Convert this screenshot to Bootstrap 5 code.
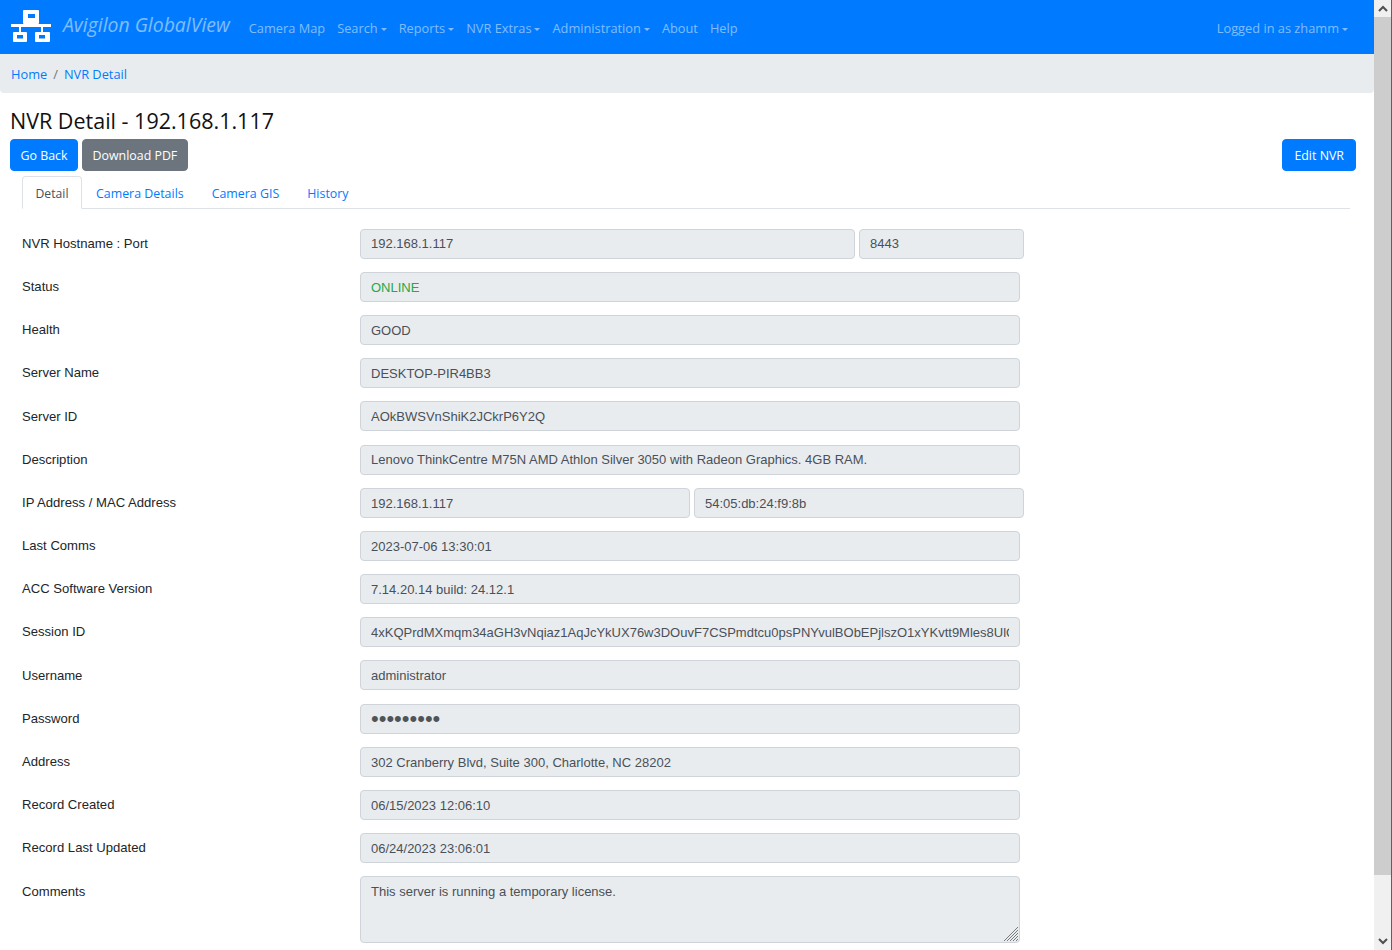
<!DOCTYPE html>
<html lang="en">
<head>
  <meta charset="UTF-8" />
  <meta name="viewport" content="width=device-width, initial-scale=1.0"/>
  <title>NVR Detail</title>
  <link rel="stylesheet" href="https://cdn.jsdelivr.net/npm/bootstrap@5.3.0/dist/css/bootstrap.min.css" />
  <style>
    html, body { height: 100%; overflow: hidden; }
    body { font-family: "Open Sans", "Noto Sans", sans-serif; font-size: 13px; color: #212529; }
    a { color: #007bff; text-decoration: none; }

    .page-shell { display: flex; height: 950px; }
    .page-main { width: 1374px; flex: none; overflow: hidden; }

    /* fake window scrollbar */
    .fake-scroll { width: 18px; flex: none; background: #f0f0f0; display: flex; flex-direction: column; border-right: 1px solid #5f5f5f; }
    .fake-scroll-btn { height: 17px; display: flex; align-items: center; justify-content: center; flex: none; }
    .fake-scroll-thumb { height: 858px; background: #cdcdcd; flex: none; }
    .fake-scroll-gap { flex: 1; }

    .top-bar { background: #007bff; height: 54px; padding: 0 20px 0 10px; }
    .top-bar .navbar-brand { font-style: italic; font-size: 19.4px; color: rgba(255,255,255,.5); padding: 0; margin: 0 13px 0 0; display: flex; align-items: center; gap: 11px; line-height: 1; }
    .top-bar .navbar-brand span { position: relative; top: -2px; }
    .top-bar .navbar-nav { margin-top: 4px; }
    .navbar-expand .navbar-nav .nav-link.bar-link { color: rgba(255,255,255,.5); font-size: 12.8px; padding: 0 6px; }
    .top-bar .dropdown-toggle::after { margin-left: 3px; vertical-align: 2px; border-width: 3.5px 3.5px 0; }

    .crumb-bar { background: #e9ecef; height: 39px; padding: 2px 11px 0; margin: 0; border-radius: 0 0 4px 4px; align-items: center; font-size: 12.8px; }
    .crumb-bar .breadcrumb-item + .breadcrumb-item { padding-left: 6px; }
    .crumb-bar .breadcrumb-item + .breadcrumb-item::before { padding-right: 6px; color: #6c757d; }

    .page-title { font-size: 21.5px; font-weight: 400; margin: 0; line-height: 30px; color: #111; }
    .head-zone { padding: 13px 18px 0 10px; }
    .btn-stack { margin-top: 3px; }
    .act-btn { font-size: 12.4px; height: 32px; padding: 0 9.500px; border-radius: 4px; line-height: 31px; }
    .act-blue { background: #007bff; border-color: #007bff; color: #fff; }
    .act-grey { background: #6c757d; border-color: #6c757d; color: #fff; }
    .act-edit { padding: 0 11px; }

    .tab-row { margin: 5px 24px 0 22px; border-bottom: 1px solid #dee2e6; height: 33px; }
    .tab-row .nav-link { font-size: 12.4px; padding: 0 13px; height: 33px; line-height: 33px; color: #007bff; border: 1px solid transparent; border-radius: 4px 4px 0 0; margin: 0; }
    .tab-row .nav-link.active { color: #495057; background: #fff; border-color: #dee2e6 #dee2e6 #fff; line-height: 34px; padding: 0 12.500px; font-size: 12.2px; }

    .detail-form { padding: 19.6px 0 0 22px; }
    .field-row { display: flex; align-items: flex-start; margin-bottom: 13.2px; }
    .field-label { width: 338px; height: 30px; flex: none; font-family: "Liberation Sans", Arial, sans-serif; font-size: 13.1px; line-height: 28.8px; padding-top: 1.2px; color: #212529; margin: 0; }
    .field-wide { width: 660px; }
    .field-split { width: 664px; display: flex; gap: 4px; }
    .field-split .part-long { width: 495px; flex: none; }
    .field-split .part-short { width: 165px; flex: none; }
    .field-split .part-half { width: 330px; flex: none; }
    .form-control.field-box, .form-control.field-box:disabled {
      font-family: "Liberation Sans", Arial, sans-serif; font-size: 13px; height: 30px; padding: 3.4px 10px 2.6px; line-height: 22px;
      background: #e9ecef; border: 1px solid #ced4da; border-radius: 4px; color: #495057; opacity: 1;
    }
    .form-control.field-box.is-online { color: #28a745; }
    .form-control.field-box.is-secret { font-size: 22px; padding: 0 10px; color: #4f5458; }
    textarea.form-control.field-box { height: 67px; min-height: 67px; resize: none; }
    .notes-wrap { position: relative; }
    .notes-grip { position: absolute; right: 1px; bottom: 1px; }
  </style>
</head>
<body>
  <div class="page-shell">
    <div class="page-main">
      <nav class="navbar navbar-expand top-bar">
        <a class="navbar-brand" href="#">
          <svg width="42" height="34" viewBox="0 0 42 34" fill="#fff">
            <path fill-rule="evenodd" d="M14 0h14a1 1 0 0 1 1 1v12a1 1 0 0 1-1 1h-5v0h18v3h-8v5h6a1 1 0 0 1 1 1v8a1 1 0 0 1-1 1H26a1 1 0 0 1-1-1v-8a1 1 0 0 1 1-1h5v-5H11v5h5a1 1 0 0 1 1 1v8a1 1 0 0 1-1 1H4a1 1 0 0 1-1-1v-8a1 1 0 0 1 1-1h5v-5H1v-3h18v0h-5a1 1 0 0 1-1-1V1a1 1 0 0 1 1-1zm4 4v4h7V4zM7 25v3.500h6V25zm22 0v3.500h6V25z"/>
            <rect x="19" y="13" width="4" height="2"/>
          </svg>
          <span>Avigilon GlobalView</span>
        </a>
        <ul class="navbar-nav">
          <li class="nav-item"><a class="nav-link bar-link" href="#">Camera Map</a></li>
          <li class="nav-item"><a class="nav-link bar-link dropdown-toggle" href="#">Search</a></li>
          <li class="nav-item"><a class="nav-link bar-link dropdown-toggle" href="#">Reports</a></li>
          <li class="nav-item"><a class="nav-link bar-link dropdown-toggle" href="#">NVR Extras</a></li>
          <li class="nav-item"><a class="nav-link bar-link dropdown-toggle" href="#">Administration</a></li>
          <li class="nav-item"><a class="nav-link bar-link" href="#">About</a></li>
          <li class="nav-item"><a class="nav-link bar-link" href="#">Help</a></li>
        </ul>
        <ul class="navbar-nav ms-auto">
          <li class="nav-item"><a class="nav-link bar-link dropdown-toggle" href="#">Logged in as zhamm</a></li>
        </ul>
      </nav>

      <ol class="breadcrumb crumb-bar">
        <li class="breadcrumb-item"><a href="#">Home</a></li>
        <li class="breadcrumb-item"><a href="#">NVR Detail</a></li>
      </ol>

      <div class="head-zone">
        <h1 class="page-title">NVR Detail - 192.168.1.117</h1>
        <div class="d-flex gap-1 btn-stack">
          <a class="btn act-btn act-blue" href="#">Go Back</a>
          <a class="btn act-btn act-grey" href="#">Download PDF</a>
          <a class="btn act-btn act-blue act-edit ms-auto" href="#">Edit NVR</a>
        </div>
      </div>

      <ul class="nav nav-tabs tab-row">
        <li class="nav-item"><a class="nav-link active" href="#">Detail</a></li>
        <li class="nav-item"><a class="nav-link" href="#">Camera Details</a></li>
        <li class="nav-item"><a class="nav-link" href="#">Camera GIS</a></li>
        <li class="nav-item"><a class="nav-link" href="#">History</a></li>
      </ul>

      <form class="detail-form">
        <div class="field-row">
          <label class="field-label">NVR Hostname : Port</label>
          <div class="field-split">
            <input class="form-control field-box part-long" disabled value="192.168.1.117" />
            <input class="form-control field-box part-short" disabled value="8443" />
          </div>
        </div>
        <div class="field-row">
          <label class="field-label">Status</label>
          <div class="field-wide"><input class="form-control field-box is-online" disabled value="ONLINE" /></div>
        </div>
        <div class="field-row">
          <label class="field-label">Health</label>
          <div class="field-wide"><input class="form-control field-box" disabled value="GOOD" /></div>
        </div>
        <div class="field-row">
          <label class="field-label">Server Name</label>
          <div class="field-wide"><input class="form-control field-box" disabled value="DESKTOP-PIR4BB3" /></div>
        </div>
        <div class="field-row">
          <label class="field-label">Server ID</label>
          <div class="field-wide"><input class="form-control field-box" disabled value="AOkBWSVnShiK2JCkrP6Y2Q" /></div>
        </div>
        <div class="field-row">
          <label class="field-label">Description</label>
          <div class="field-wide"><input class="form-control field-box" disabled value="Lenovo ThinkCentre M75N AMD Athlon Silver 3050 with Radeon Graphics. 4GB RAM." /></div>
        </div>
        <div class="field-row">
          <label class="field-label">IP Address / MAC Address</label>
          <div class="field-split">
            <input class="form-control field-box part-half" disabled value="192.168.1.117" />
            <input class="form-control field-box part-half" disabled value="54:05:db:24:f9:8b" />
          </div>
        </div>
        <div class="field-row">
          <label class="field-label">Last Comms</label>
          <div class="field-wide"><input class="form-control field-box" disabled value="2023-07-06 13:30:01" /></div>
        </div>
        <div class="field-row">
          <label class="field-label">ACC Software Version</label>
          <div class="field-wide"><input class="form-control field-box" disabled value="7.14.20.14 build: 24.12.1" /></div>
        </div>
        <div class="field-row">
          <label class="field-label">Session ID</label>
          <div class="field-wide"><input class="form-control field-box" disabled value="4xKQPrdMXmqm34aGH3vNqiaz1AqJcYkUX76w3DOuvF7CSPmdtcu0psPNYvulBObEPjlszO1xYKvtt9Mles8UlQlQ2" /></div>
        </div>
        <div class="field-row">
          <label class="field-label">Username</label>
          <div class="field-wide"><input class="form-control field-box" disabled value="administrator" /></div>
        </div>
        <div class="field-row">
          <label class="field-label">Password</label>
          <div class="field-wide"><input type="password" class="form-control field-box is-secret" disabled value="password1" /></div>
        </div>
        <div class="field-row">
          <label class="field-label">Address</label>
          <div class="field-wide"><input class="form-control field-box" disabled value="302 Cranberry Blvd, Suite 300, Charlotte, NC 28202" /></div>
        </div>
        <div class="field-row">
          <label class="field-label">Record Created</label>
          <div class="field-wide"><input class="form-control field-box" disabled value="06/15/2023 12:06:10" /></div>
        </div>
        <div class="field-row">
          <label class="field-label">Record Last Updated</label>
          <div class="field-wide"><input class="form-control field-box" disabled value="06/24/2023 23:06:01" /></div>
        </div>
        <div class="field-row">
          <label class="field-label">Comments</label>
          <div class="field-wide notes-wrap">
            <textarea class="form-control field-box" disabled>This server is running a temporary license.</textarea>
            <svg class="notes-grip" width="16" height="16" viewBox="0 0 16 16" stroke="#7a7a7a" stroke-width="1" fill="none">
              <path d="M1 15L15 1M4 15L15 4M7 15l8-8M10 15l5-5M13 15l2-2"/>
            </svg>
          </div>
        </div>
      </form>
    </div>

    <div class="fake-scroll">
      <div class="fake-scroll-btn"><svg width="10" height="7" viewBox="0 0 10 7"><path d="M1 6l4-4 4 4" fill="none" stroke="#505050" stroke-width="2"/></svg></div>
      <div class="fake-scroll-thumb"></div>
      <div class="fake-scroll-gap"></div>
      <div class="fake-scroll-btn"><svg width="10" height="7" viewBox="0 0 10 7"><path d="M1 1l4 4 4-4" fill="none" stroke="#505050" stroke-width="2"/></svg></div>
    </div>
  </div>

  <script src="https://cdn.jsdelivr.net/npm/bootstrap@5.3.0/dist/js/bootstrap.bundle.min.js"></script>
</body>
</html>
